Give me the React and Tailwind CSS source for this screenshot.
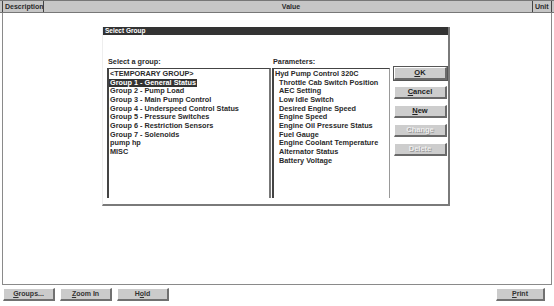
const groups = [
  '<TEMPORARY GROUP>',
  'Group 1 - General Status',
  'Group 2 - Pump Load',
  'Group 3 - Main Pump Control',
  'Group 4 - Underspeed Control Status',
  'Group 5 - Pressure Switches',
  'Group 6 - Restriction Sensors',
  'Group 7 - Solenoids',
  'pump hp',
  'MISC',
];

const params = [
  'Throttle Cab Switch Position',
  'AEC Setting',
  'Low Idle Switch',
  'Desired Engine Speed',
  'Engine Speed',
  'Engine Oil Pressure Status',
  'Fuel Gauge',
  'Engine Coolant Temperature',
  'Alternator Status',
  'Battery Voltage',
];

const Ul = ({ children }) => <span className="underline underline-offset-1">{children}</span>;

function DlgButton({ children, disabled, primary }) {
  return (
    <div
      className={`flex h-[13px] w-[53px] items-center justify-center border-t border-l border-t-white border-l-white border-b-2 border-r-2 border-b-[#6a6a6a] border-r-[#6a6a6a] bg-[#cdcdcd] text-[7.5px] ${
        disabled ? 'text-[#eeeeee] [text-shadow:1px_1px_0_#9a9a9a]' : 'text-[#222]'
      } ${primary ? 'outline outline-1 outline-[#555]' : ''}`}
    >
      {children}
    </div>
  );
}

function BarButton({ children, width = 'w-[52px]' }) {
  return (
    <div className={`flex h-[13px] ${width} items-center justify-center border-t border-l border-t-white border-l-white border-b-2 border-r-2 border-b-[#707070] border-r-[#707070] bg-[#cbcbcb] text-[7px] text-[#333]`}>
      {children}
    </div>
  );
}

export default function App() {
  return (
    <div
      className="relative h-[306px] w-[554px] overflow-hidden bg-white font-bold text-[#2a2a2a]"
      style={{ fontFamily: '"Liberation Sans", Arial, sans-serif' }}
    >
      <div className="flex h-[13px] items-stretch border-t border-b border-[#777] bg-[#c6c6c6] pl-[2px] pr-[2px] text-[7px] leading-none">
        <div className="flex w-[42px] items-center border-x border-[#444] pl-[2px]">Description</div>
        <div className="flex flex-1 items-center justify-center pl-[6px]">Value</div>
        <div className="flex w-[20px] items-center border-x border-[#444] pl-[2px]">Unit</div>
      </div>

      <div className="mx-[2px] h-[272px] border-x border-b border-[#8a8a8a]" />

      <div className="flex h-[20px] items-center px-[3px] pb-[1px]">
        <div className="flex gap-[5px]">
          <BarButton><Ul>G</Ul>roups...</BarButton>
          <BarButton><Ul>Z</Ul>oom In</BarButton>
          <BarButton>H<Ul>o</Ul>ld</BarButton>
        </div>
        <div className="ml-auto mr-[6px]">
          <BarButton width="w-[49px]"><Ul>P</Ul>rint</BarButton>
        </div>
      </div>

      <div className="absolute left-[102px] top-[27px] flex h-[179px] w-[348px] flex-col border-l border-l-[#eeeeee] border-r-2 border-b-2 border-r-[#7a7a7a] border-b-[#7a7a7a] bg-white">
        <div className="flex h-[8px] items-center bg-[#333] pl-[2px] text-[6.5px] leading-none text-white">Select Group</div>
        <div className="flex flex-1 pl-[4px] pt-[22px]">
          <div className="flex w-[164px] flex-col">
            <div className="mb-[2px] h-[9px] pl-[1px] text-[7.3px] leading-[9px]">Select a group:</div>
            <div className="h-[130px] border-t border-l-2 border-r-2 border-t-[#444] border-l-[#444] border-r-[#777] pt-[1px] text-[7.3px] leading-[8.65px]">
              {groups.map((g, i) => (
                <div key={g} className="flex">
                  <span className={i === 1 ? 'bg-[#333] px-[1px] text-white' : 'px-[1px]'}>{g}</span>
                </div>
              ))}
            </div>
          </div>
          <div className="ml-[1px] flex w-[118px] flex-col">
            <div className="mb-[2px] h-[9px] pl-[1px] text-[7.3px] leading-[9px]">Parameters:</div>
            <div className="h-[130px] border-t border-l-2 border-r border-t-[#444] border-l-[#444] border-r-[#999] pt-[1px] pl-[1px] text-[7.3px] leading-[8.65px]">
              <div>Hyd Pump Control 320C</div>
              {params.map((p) => (
                <div key={p} className="pl-[4px]">{p}</div>
              ))}
            </div>
          </div>
          <div className="ml-[4px] flex flex-col gap-[6px] pt-[10px]">
            <DlgButton primary><Ul>O</Ul>K</DlgButton>
            <DlgButton><Ul>C</Ul>ancel</DlgButton>
            <DlgButton><Ul>N</Ul>ew</DlgButton>
            <DlgButton disabled>Change</DlgButton>
            <DlgButton disabled>Delete</DlgButton>
          </div>
        </div>
      </div>
    </div>
  );
}
